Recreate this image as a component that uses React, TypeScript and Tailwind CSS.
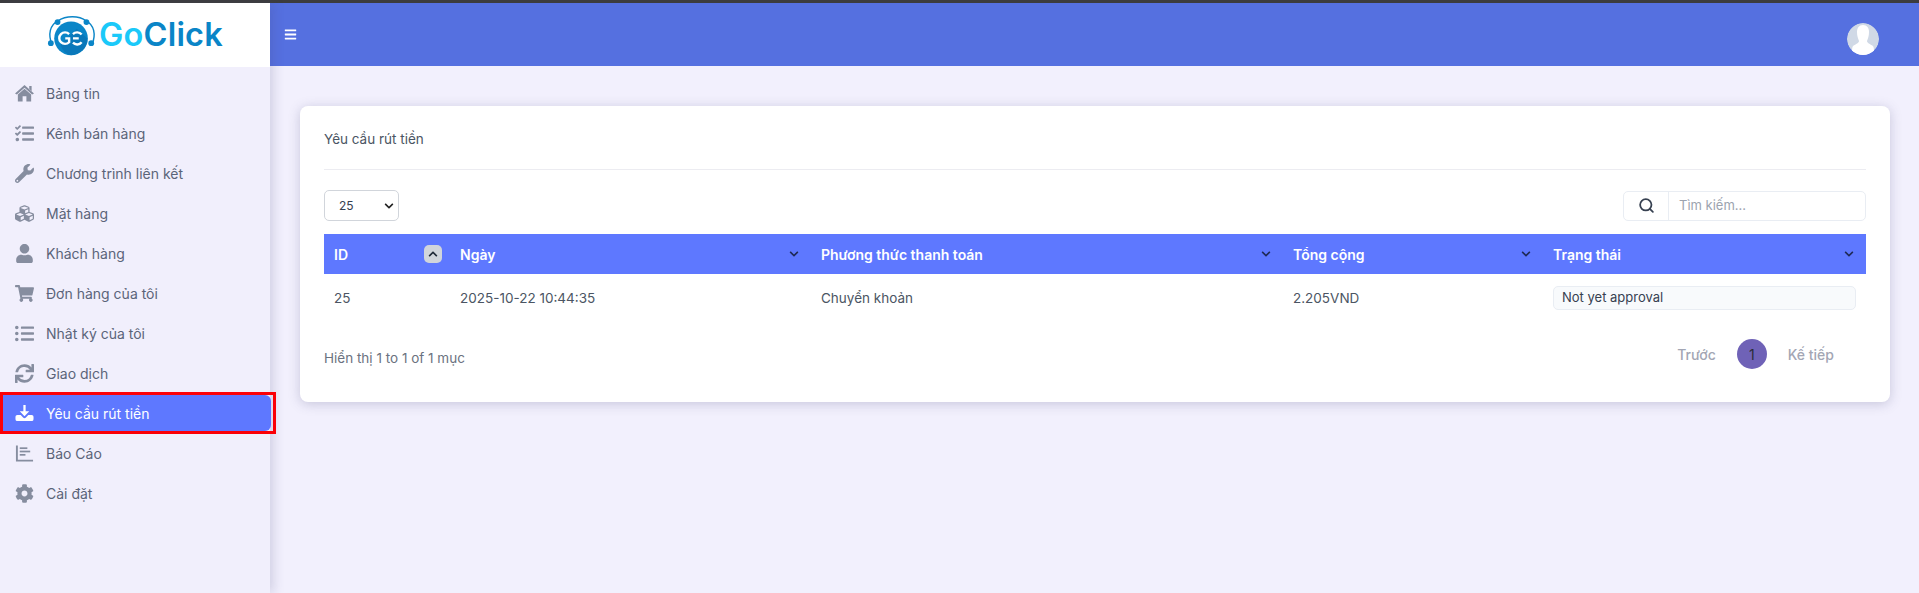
import React from 'react';
import { FaTasks, FaWrench, FaCubes, FaUser, FaShoppingCart, FaListUl, FaSync, FaCog, FaBars, FaChevronDown, FaChevronUp } from 'react-icons/fa';
import { Search } from 'lucide-react';

type IconProps = { size?: number; className?: string };

// these three differ too much from the package versions
function HomeIcon({ size = 19, className }: IconProps) {
  return (
    <svg width={size} height={size} viewBox="0 0 20 20" className={className} fill="currentColor">
      <path d="M10 1 L20 10 L18 11 L10 4 L2 11 L0 10 Z" />
      <path d="M15 2 h2.500 v5.500 L15 5.300 Z" />
      <path d="M10 5 L17 11 V18.500 H12 V13 H8 V18.500 H3 V11 Z" />
    </svg>
  );
}

function TrayDownloadIcon({ size = 19, className }: IconProps) {
  return (
    <svg width={size} height={size} viewBox="0 0 20 20" className={className} fill="currentColor">
      <path d="M8.800 1 H11.200 V7.500 H15 L10 12.800 L5 7.500 H8.800 Z" />
      <path d="M0.500 13.500 Q0.500 11.500 2.500 11.500 H6 L8.500 14.300 Q10 15.500 11.500 14.300 L14 11.500 H17.500 Q19.500 11.500 19.500 13.500 V16 Q19.500 18 17.500 18 H2.500 Q0.500 18 0.500 16 Z" />
    </svg>
  );
}

function AxisChartIcon({ size = 19, className }: IconProps) {
  return (
    <svg width={size} height={size} viewBox="0 0 20 20" className={className} fill="currentColor">
      <path d="M1 1.500 H3 V16.500 H19 V18.500 H1 Z" />
      <rect x="5" y="3.500" width="8" height="1.800" />
      <rect x="5" y="7" width="11" height="1.800" />
      <rect x="5" y="10.500" width="6" height="1.800" />
    </svg>
  );
}

const menuItems = [
  { label: 'Bảng tin', icon: HomeIcon },
  { label: 'Kênh bán hàng', icon: FaTasks },
  { label: 'Chương trình liên kết', icon: FaWrench },
  { label: 'Mặt hàng', icon: FaCubes },
  { label: 'Khách hàng', icon: FaUser },
  { label: 'Đơn hàng của tôi', icon: FaShoppingCart },
  { label: 'Nhật ký của tôi', icon: FaListUl },
  { label: 'Giao dịch', icon: FaSync },
  { label: 'Yêu cầu rút tiền', icon: TrayDownloadIcon, active: true },
  { label: 'Báo Cáo', icon: AxisChartIcon },
  { label: 'Cài đặt', icon: FaCog },
];

function Logo() {
  return (
    <div className="flex items-center">
      <svg width="50" height="41" viewBox="0 0 52 42" className="mr-[2px]">
        <path d="M5 30 C1 20 3 10 11 6 M11 6 C20 0 33 0 41 6 M41 6 C49 10 51 20 47 30" fill="none" stroke="#0b86c8" strokeWidth="1.5" />
        <circle cx="11" cy="7" r="3" fill="#0b86c8" />
        <circle cx="41" cy="7" r="3" fill="#0b86c8" />
        <circle cx="4" cy="29" r="3" fill="#0b86c8" />
        <circle cx="46" cy="29" r="3" fill="#0b86c8" />
        <circle cx="25" cy="24" r="17.5" fill="#0b86c8" />
        <path d="M14 31 L31 14 L42 24 A17.5 17.5 0 0 1 25 41.500 Q18 41 14 31 Z" fill="#0a6fb0" opacity="0.6" />
        <path d="M23 19.500 A6 6 0 1 0 23 28 L23 24 L19 24" fill="none" stroke="#fff" strokeWidth="2.500" />
        <path d="M27 19.500 A6 6 0 0 1 36 20 M27 24 L33 24 M27 28.500 A6 6 0 0 0 36 28" fill="none" stroke="#fff" strokeWidth="2.500" />
      </svg>
      <span className="font-['Inter',sans-serif] text-[32.500px] font-semibold leading-none tracking-[0.2px]">
        <span className="text-[#1bc9f9]">Go</span>
        <span className="text-[#0a85c7]">Click</span>
      </span>
    </div>
  );
}

function Sidebar() {
  return (
    <aside className="z-10 flex w-[270px] shrink-0 flex-col bg-[#f1effc] shadow-[4px_0_10px_rgba(70,70,120,0.18)]">
      <div className="flex h-[64px] items-center justify-center bg-white pt-[1px]">
        <Logo />
      </div>
      <nav className="flex flex-col pt-[6px]">
        {menuItems.map(item => {
          const Icon = item.icon;
          return (
            <div
              key={item.label}
              className={item.active
                ? 'flex h-[42px] w-[276px] items-center border-[3px] border-[#fb0007] -my-[1px]'
                : 'flex h-[40px] items-center'}
            >
              <div className={item.active
                ? 'flex h-full w-[268px] items-center rounded-r-[6px] bg-[#5e78ff] pl-[12px] text-white'
                : 'flex h-full w-full items-center pl-[15px] text-[#5b6479]'}>
                <span className="flex w-[31px] shrink-0 items-center">
                  <Icon size={19} className={item.active ? 'text-white' : 'text-[#868d9f]'} />
                </span>
                <span className="font-['Inter',sans-serif] text-[14px]">{item.label}</span>
              </div>
            </div>
          );
        })}
      </nav>
    </aside>
  );
}

function HeaderCell({ label, sorted }: { label: string; sorted?: boolean }) {
  return (
    <th className="h-[40px] p-0 pl-[10px] text-left">
      <div className="flex items-center justify-between pr-[12px] text-[14px] font-semibold text-white">
        <span>{label}</span>
        {sorted ? (
          <span className="mr-[-4px] flex h-[18px] w-[18px] items-center justify-center rounded-[5px] bg-[#d1d5db] text-[#1f2937]">
            <FaChevronUp size={10} />
          </span>
        ) : (
          <FaChevronDown size={10} className="text-[#1f2a55]" />
        )}
      </div>
    </th>
  );
}

export default function App() {
  return (
    <div className="flex h-screen flex-col overflow-hidden bg-[#f2f0fd] font-['Inter',sans-serif]">
      <div className="h-[3px] shrink-0 bg-[#3c3c3e]" />
      <div className="flex min-h-0 flex-1">
        <Sidebar />
        <div className="flex min-w-0 flex-1 flex-col">
          <header className="flex h-[63px] shrink-0 items-center justify-between bg-[#5570e0] pl-[14px] pr-[40px]">
            <FaBars size={13} className="text-white" />
            <svg width="32" height="32" viewBox="0 0 32 32" className="mt-[9px] rounded-full">
              <circle cx="16" cy="16" r="16" fill="#d0d9e6" />
              <path d="M16 2c4 0 6 3 6 7 0 4-1 6-2 9 0 2 3 3 6 5 1 1 1 4 1 9H5c0-5 0-8 1-9 3-2 6-3 6-5-1-3-2-5-2-9 0-4 2-7 6-7z" fill="#fff" />
            </svg>
          </header>
          <main className="pl-[30px] pr-[29px] pt-[40px]">
            <div className="h-[296px] rounded-[8px] bg-white px-[24px] shadow-[0_2px_12px_rgba(70,70,120,0.25)]">
              <div className="flex h-[64px] items-center border-b border-[#ececf1] pt-[4px] text-[13.500px] text-[#4b5563]">
                Yêu cầu rút tiền
              </div>
              <div className="flex items-center justify-between pt-[20px]">
                <div className="flex h-[31px] w-[75px] items-center justify-between rounded-[5px] border border-[#d1d5db] pl-[14px] pr-[4px] text-[12px] text-[#374151]">
                  <span>25</span>
                  <FaChevronDown size={10} className="text-[#222]" />
                </div>
                <div className="flex h-[30px] w-[243px] rounded-[5px] border border-[#e9edf3]">
                  <span className="flex w-[45px] items-center justify-center border-r border-[#e9edf3] text-[#374151]">
                    <Search size={17} strokeWidth={2.5} />
                  </span>
                  <span className="flex items-center pl-[10px] text-[13px] text-[#9ca3af]">Tìm kiếm...</span>
                </div>
              </div>
              <table className="mt-[13px] w-full table-fixed border-collapse">
                <colgroup>
                  <col className="w-[126px]" />
                  <col className="w-[361px]" />
                  <col className="w-[472px]" />
                  <col className="w-[260px]" />
                  <col />
                </colgroup>
                <thead className="bg-[#5e78ff]">
                  <tr>
                    <HeaderCell label="ID" sorted />
                    <HeaderCell label="Ngày" />
                    <HeaderCell label="Phương thức thanh toán" />
                    <HeaderCell label="Tổng cộng" />
                    <HeaderCell label="Trạng thái" />
                  </tr>
                </thead>
                <tbody>
                  <tr className="text-[13.500px] text-[#4b5563]">
                    <td className="h-[48px] pl-[10px]">25</td>
                    <td className="pl-[10px]">2025-10-22 10:44:35</td>
                    <td className="pl-[10px]">Chuyển khoản</td>
                    <td className="pl-[10px]">2.205VND</td>
                    <td className="pl-[10px] pr-[10px]">
                      <div className="flex h-[24px] items-center rounded-[5px] border border-[#e9edf3] bg-[#f8fafc] pl-[8px] text-[13px] text-[#374151]">
                        Not yet approval
                      </div>
                    </td>
                  </tr>
                </tbody>
              </table>
              <div className="flex items-center justify-between pt-[17px]">
                <span className="pt-[8px] text-[13.500px] text-[#6b7280]">Hiển thị 1 to 1 of 1 mục</span>
                <div className="flex items-center pr-[32px] text-[14px] font-medium text-[#a3a6b4]">
                  <span>Trước</span>
                  <span className="mx-[21px] flex h-[30px] w-[30px] items-center justify-center rounded-full bg-[#6f62b7] font-normal text-[#2b2b3a]">1</span>
                  <span>Kế tiếp</span>
                </div>
              </div>
            </div>
          </main>
        </div>
      </div>
    </div>
  );
}
